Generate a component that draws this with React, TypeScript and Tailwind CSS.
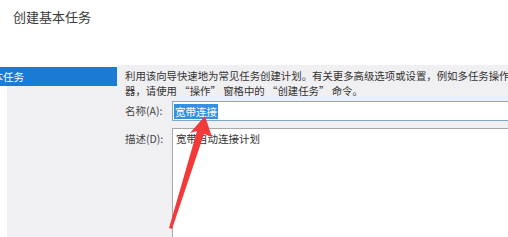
export default function App() {
  const font = { fontFamily: '"Noto Sans CJK SC", "Microsoft YaHei", sans-serif' };
  return (
    <div className="relative w-[508px] h-[237px] overflow-hidden bg-white text-[#333]" style={font}>
      <div className="h-[65px] pl-[13px] pt-[8px]">
        <h1 className="text-[13px] leading-[18px] text-[#3a3a3a]">创建基本任务</h1>
      </div>
      <div className="flex h-[172px] bg-[#f0eff2]">
        <div className="flex w-[117px] flex-col">
          <div className="h-[2px] bg-white" />
          <div className="h-[19px] bg-[#1a7ad4] text-[10.5px] leading-[19px] text-white whitespace-nowrap overflow-hidden">
            <span className="relative -left-[18px]">基本任务</span>
          </div>
          <div className="flex-1 border-l-[7px] border-white" />
        </div>
        <div className="-mr-[4px] flex min-w-0 flex-1 flex-col pl-[8px] pt-[3px]">
          <p className="whitespace-nowrap text-[10.4px] leading-[15px]">
            利用该向导快速地为常见任务创建计划。有关更多高级选项或设置，例如多任务操作
          </p>
          <p className="whitespace-nowrap text-[10.4px] leading-[15px]">
            器，请使用 “操作” 窗格中的 “创建任务” 命令。
          </p>
          <div className="mt-[3px] flex items-center">
            <span className="w-[47px] shrink-0 text-[10.5px] text-[#444]">名称(A):</span>
            <div className="flex h-[20px] flex-1 items-center border border-[#7fa9c8] bg-white pl-[1px]">
              <span className="bg-[#3391e0] px-[1px] text-[10.5px] leading-[15px] text-white">宽带连接</span>
            </div>
          </div>
          <div className="mt-[7px] flex flex-1">
            <span className="w-[47px] shrink-0 pt-[4px] text-[10.5px] leading-[14px] text-[#444]">描述(D):</span>
            <div className="flex-1 border border-b-0 border-[#a8a8a8] bg-white pl-[3px] pt-[3px] text-[10.5px] leading-[14px]">
              宽带自动连接计划
            </div>
          </div>
        </div>
      </div>
      <svg className="absolute left-0 top-0" width="508" height="237" viewBox="0 0 508 237">
        <polygon
          points="205,116 212,137 204,134 172,229 169,228 197,131 190,133"
          fill="#f23a3a"
        />
      </svg>
    </div>
  );
}
